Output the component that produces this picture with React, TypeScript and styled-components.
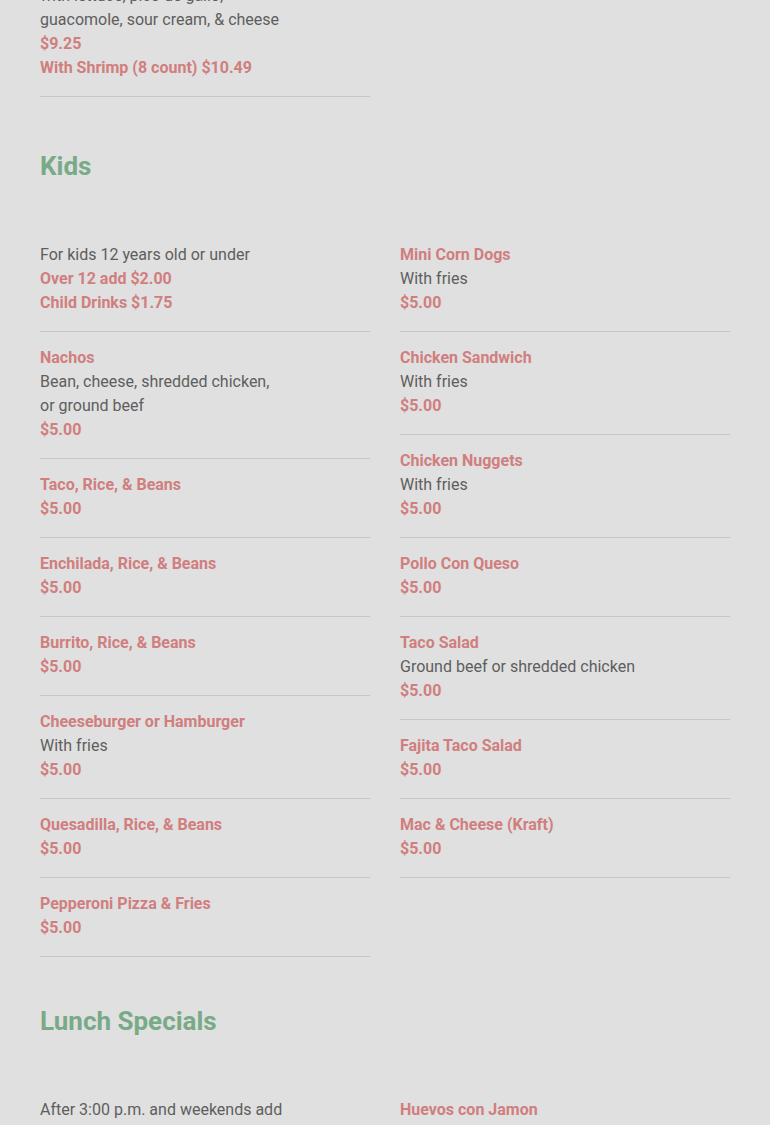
import React from "react";
import styled, { createGlobalStyle } from "styled-components";

type Item = {
  title?: string;
  desc?: string[];
  prices?: string[];
};

const kidsLeft: Item[] = [
  { desc: ["For kids 12 years old or under"], prices: ["Over 12 add $2.00", "Child Drinks $1.75"] },
  { title: "Nachos", desc: ["Bean, cheese, shredded chicken,", "or ground beef"], prices: ["$5.00"] },
  { title: "Taco, Rice, & Beans", prices: ["$5.00"] },
  { title: "Enchilada, Rice, & Beans", prices: ["$5.00"] },
  { title: "Burrito, Rice, & Beans", prices: ["$5.00"] },
  { title: "Cheeseburger or Hamburger", desc: ["With fries"], prices: ["$5.00"] },
  { title: "Quesadilla, Rice, & Beans", prices: ["$5.00"] },
  { title: "Pepperoni Pizza & Fries", prices: ["$5.00"] },
];

const kidsRight: Item[] = [
  { title: "Mini Corn Dogs", desc: ["With fries"], prices: ["$5.00"] },
  { title: "Chicken Sandwich", desc: ["With fries"], prices: ["$5.00"] },
  { title: "Chicken Nuggets", desc: ["With fries"], prices: ["$5.00"] },
  { title: "Pollo Con Queso", prices: ["$5.00"] },
  { title: "Taco Salad", desc: ["Ground beef or shredded chicken"], prices: ["$5.00"] },
  { title: "Fajita Taco Salad", prices: ["$5.00"] },
  { title: "Mac & Cheese (Kraft)", prices: ["$5.00"] },
];

const MenuItem = ({ item }: { item: Item }) => (
  <ItemBox>
    {item.title && <Title>{item.title}</Title>}
    {item.desc && (
      <Desc>
        {item.desc.map((line, i) => (
          <React.Fragment key={i}>
            {i > 0 && <br />}
            {line}
          </React.Fragment>
        ))}
      </Desc>
    )}
    {item.prices?.map((p) => (
      <Price key={p}>{p}</Price>
    ))}
  </ItemBox>
);

const App = () => {
  return (
    <Page>
      <GlobalStyle />
      <Scrolled>
        <Columns>
          <Column>
            <ItemBox>
              <Desc>
                with lettuce, pico de gallo,
                <br />
                guacomole, sour cream, &amp; cheese
              </Desc>
              <Price>$9.25</Price>
              <Price>With Shrimp (8 count) $10.49</Price>
            </ItemBox>
          </Column>
          <Column />
        </Columns>

        <Section $top={38}>
          <Heading>Kids</Heading>
          <Columns>
            <Column>
              {kidsLeft.map((it, i) => (
                <MenuItem key={i} item={it} />
              ))}
            </Column>
            <Column>
              {kidsRight.map((it, i) => (
                <MenuItem key={i} item={it} />
              ))}
            </Column>
          </Columns>
        </Section>

        <Section $top={33}>
          <Heading>Lunch Specials</Heading>
          <Columns>
            <Column>
              <ItemBox>
                <Desc>After 3:00 p.m. and weekends add</Desc>
              </ItemBox>
            </Column>
            <Column>
              <ItemBox>
                <Title>Huevos con Jamon</Title>
              </ItemBox>
            </Column>
          </Columns>
        </Section>
      </Scrolled>
    </Page>
  );
};

export default App;

const GlobalStyle = createGlobalStyle`
  html, body {
    margin: 0;
    padding: 0;
    background: #e0e0e0;
  }
  body {
    font-family: Roboto, "Liberation Sans", sans-serif;
  }
`;

const Page = styled.main`
  width: 100%;
  height: 1125px;
  overflow: hidden;
  background-color: #e0e0e0;
  padding: 0 40px;
  box-sizing: border-box;
`;

const Scrolled = styled.div`
  margin-top: -16px;
`;

const Section = styled.section<{ $top: number }>`
  padding-top: ${(p) => p.$top}px;
`;

const Heading = styled.h2`
  margin: 0 0 60px;
  font-size: 26px;
  line-height: 34px;
  font-weight: 700;
  color: #78aa88;
`;

const Columns = styled.div`
  display: grid;
  grid-template-columns: 330px 330px;
  column-gap: 30px;
  align-items: start;
`;

const Column = styled.div`
  display: flex;
  flex-direction: column;
`;

const ItemBox = styled.div`
  padding-bottom: 16px;
  margin-bottom: 14px;
  border-bottom: 1px solid #c6c6c6;
  font-size: 16px;
  line-height: 24px;
`;

const Title = styled.div`
  font-weight: 700;
  color: #d07e7e;
`;

const Desc = styled.div`
  color: #5e5e5e;
`;

const Price = styled.div`
  font-weight: 700;
  color: #d07e7e;
`;
